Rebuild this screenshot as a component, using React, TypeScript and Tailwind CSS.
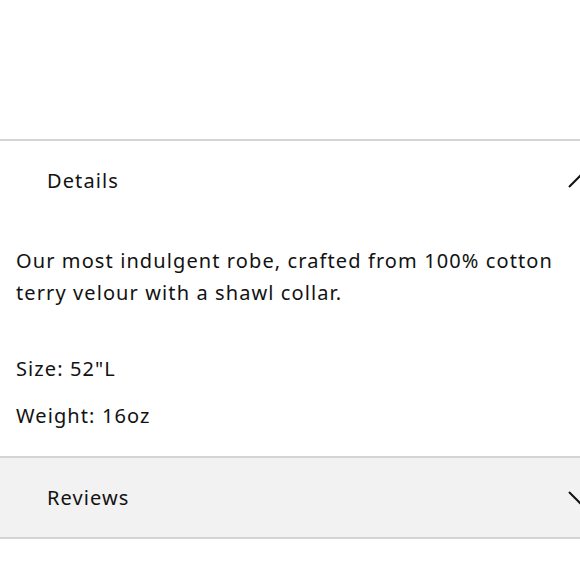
import { ReactNode } from 'react'

function Chevron({ up }: { up?: boolean }) {
  return (
    <svg
      viewBox="0 0 24 14"
      className="w-[24px] h-[14px] shrink-0 -mr-[12px]"
      fill="none"
      stroke="#121212"
      strokeWidth="2"
    >
      {up ? <path d="M1 13 L12 2 L23 13" /> : <path d="M1 1 L12 12 L23 1" />}
    </svg>
  )
}

function Row({ label, up, shaded, children }: { label: string; up?: boolean; shaded?: boolean; children?: ReactNode }) {
  return (
    <div className={shaded ? 'bg-[#f2f2f2]' : ''}>
      <div className={`flex items-center justify-between pl-[47px] ${shaded ? 'h-[79px]' : 'h-[80px]'}`}>
        <span>{label}</span>
        <Chevron up={up} />
      </div>
      {children}
    </div>
  )
}

export default function App() {
  return (
    <div
      className="w-[580px] h-[580px] overflow-hidden bg-white text-[#121212] text-[20px] leading-[32px] tracking-[1.1px]"
      style={{ fontFamily: '"Noto Sans", Arial, sans-serif' }}
    >
      <div className="h-[139px]" />
      <div className="border-t-2 border-[#d4d4d4]">
        <Row label="Details" up>
          <div className="px-[16px] pt-[24px] pb-[24px]">
            <p>Our most indulgent robe, crafted from 100% cotton terry velour with a shawl collar.</p>
            <p className="mt-[44px]">Size: 52"L</p>
            <p className="mt-[15px]">Weight: 16oz</p>
          </div>
        </Row>
      </div>
      <div className="border-y-2 border-[#d4d4d4]">
        <Row label="Reviews" shaded />
      </div>
    </div>
  )
}
